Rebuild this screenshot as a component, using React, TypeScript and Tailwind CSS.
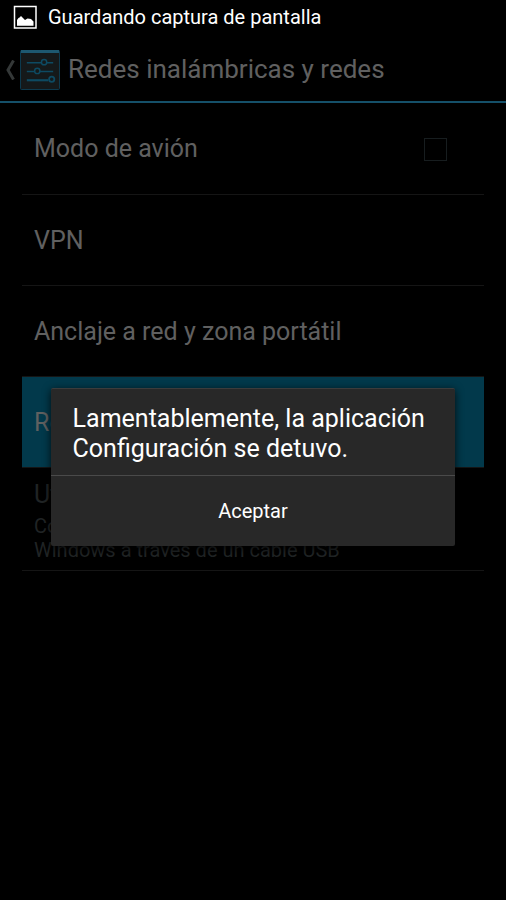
import { useState } from 'react';
import clsx from 'clsx';

function ScreenshotIcon() {
  return (
    <svg className="w-6 h-6 flex-shrink-0" viewBox="0 0 24 24" aria-hidden="true">
      <rect x="1.5" y="1.5" width="21.5" height="21.5" fill="none" stroke="#fff" strokeWidth="1.5" />
      <path d="M4 20.8V15l1.5-2 1-.5L8 11l1.5 1.5L12 15l2.5-1.5L18 14l2.500 2.500v4.300z" fill="#fff" />
    </svg>
  );
}

function SettingsIcon() {
  return (
    <svg className="w-10 h-10" viewBox="0 0 41 41" fill="none" aria-hidden="true">
      <rect x="0.5" y="0.5" width="40" height="40" rx="1" fill="#15191a" stroke="#0d3c50" />
      <path d="M1 1.5h39" stroke="#1d5870" strokeWidth="3" />
      <g stroke="#0d4a62" strokeWidth="1.5">
        <path d="M7 13h15M27.5 13H34M7 22h8M20.5 22H34" />
        <path d="M7 31h22" strokeWidth="2.2" />
        <circle cx="24.700" cy="12.5" r="2.7" />
        <circle cx="17.700" cy="21.5" r="2.7" />
        <circle cx="32.500" cy="30" r="2.7" strokeWidth="1.8" />
      </g>
    </svg>
  );
}

const items = ['VPN', 'Anclaje a red y zona portátil', 'Redes móviles'];

export default function App() {
  const [airplane, setAirplane] = useState(false);
  const [selected, setSelected] = useState('Redes móviles');
  const [open, setOpen] = useState(true);

  return (
    <div className="flex min-h-screen flex-col bg-black font-[Roboto,sans-serif] text-[#606060]">
      {/* Status bar */}
      <div className="flex h-[34px] items-center gap-[11px] px-[13px] text-xl text-white">
        <ScreenshotIcon />
        <span>Guardando captura de pantalla</span>
      </div>

      <div className="relative flex flex-1 flex-col">
        {/* Action bar */}
        <header className="flex h-[69px] items-center border-b-2 border-[#155069] pl-[5px] pt-1">
          <a href="#ajustes" aria-label="Volver" className="flex items-center gap-1">
            <svg className="h-5 w-[11px]" viewBox="0 0 11 20" fill="none" aria-hidden="true">
              <path d="M8.5 0.5L3 10l5.5 9.5" stroke="#343838" strokeWidth="3" />
            </svg>
            <SettingsIcon />
          </a>
          <h1 className="ml-2 text-[26px]">Redes inalámbricas y redes</h1>
        </header>

        {/* Settings list */}
        <ul className="mx-[22px] pt-px text-[25px]">
          <li className="border-b border-[#151515]">
            <label className="flex h-[90px] items-center justify-between pl-3 pr-[37px]">
              Modo de avión
              <input
                type="checkbox"
                checked={airplane}
                onChange={(e) => setAirplane(e.target.checked)}
                className="h-[23px] w-[23px] appearance-none border border-[#171d1f] checked:bg-[#155069]"
              />
            </label>
          </li>
          {items.map((item) => (
            <li key={item} className="border-b border-[#151515]">
              <button
                onClick={() => setSelected(item)}
                className={clsx('block h-[90px] w-full pl-3 pt-0.5 text-left', selected === item && 'bg-[#02394b]')}
              >
                {item}
              </button>
            </li>
          ))}
          <li className="border-b border-[#151515]">
            <button disabled className="block w-full py-2 pl-3 text-left text-[#202425]">
              <span className="block">Utilidades de Internet</span>
              <span className="block max-w-[320px] text-xl leading-6">
                Conectarse a Internet desde Windows a través de un cable USB
              </span>
            </button>
          </li>
        </ul>

        {/* Crash dialog */}
        {open && (
          <div className="absolute inset-0 flex items-center justify-center">
            <div
              role="alertdialog"
              aria-labelledby="crash-message"
              className="w-4/5 rounded-xs border-t border-[#3c3c3c] bg-[#282828] text-white shadow-[0_2px_8px_rgba(0,0,0,0.8)]"
            >
              <p id="crash-message" className="px-[22px] pt-[15px] pb-[11px] text-[25px] leading-[30px]">
                Lamentablemente, la aplicación Configuración se detuvo.
              </p>
              <button onClick={() => setOpen(false)} className="h-[71px] w-full border-t border-[#4a4a4a] text-xl">
                Aceptar
              </button>
            </div>
          </div>
        )}
      </div>
    </div>
  );
}
